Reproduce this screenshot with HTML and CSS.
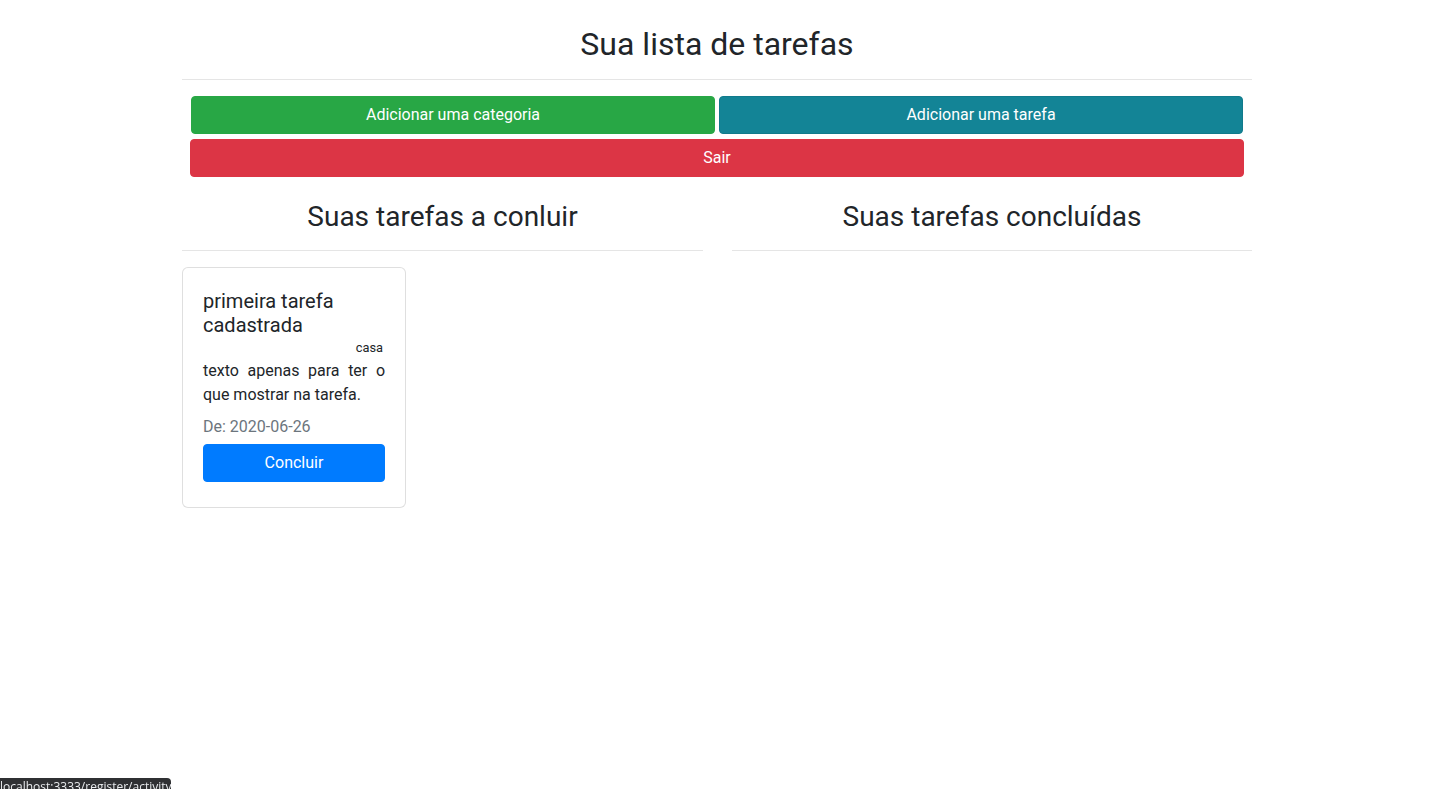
FILE: index.html
```html
<!DOCTYPE html>
<html lang="pt-br">
<head>
<meta charset="utf-8">
<title>Sua lista de tarefas</title>
<link rel="stylesheet" href="styles.css">
</head>
<body>
<main class="container">
  <h2 class="page-title">Sua lista de tarefas</h2>
  <hr class="rule">
  <div class="actions">
    <div class="actions-row">
      <button class="btn btn-success">Adicionar uma categoria</button>
      <button class="btn btn-info">Adicionar uma tarefa</button>
    </div>
    <button class="btn btn-danger btn-block">Sair</button>
  </div>
  <div class="columns">
    <section class="column">
      <h3 class="column-title">Suas tarefas a conluir</h3>
      <hr class="rule">
      <div class="card">
        <div class="card-body">
          <h5 class="card-title">primeira tarefa cadastrada</h5>
          <div class="card-category">casa</div>
          <p class="card-text">texto apenas para ter o que mostrar na tarefa.</p>
          <div class="card-date">De: 2020-06-26</div>
          <button class="btn btn-primary btn-block">Concluir</button>
        </div>
      </div>
    </section>
    <section class="column">
      <h3 class="column-title">Suas tarefas concluídas</h3>
      <hr class="rule">
    </section>
  </div>
</main>
<div class="status-bar">localhost:3333/register/activity</div>
</body>
</html>
```

FILE: styles.css
```css
* { box-sizing: border-box; }

html, body {
  margin: 0;
  padding: 0;
  background: #fff;
}

body {
  font-family: Roboto, "Liberation Sans", Arial, sans-serif;
  font-size: 16px;
  line-height: 1.5;
  color: #212529;
}

.container {
  width: 1070px;
  margin-left: calc(50% - 536.5px);
  padding-top: 25px;
}

.page-title {
  margin: 0;
  font-size: 32px;
  font-weight: 400;
  line-height: 1.2;
  text-align: center;
}

.rule {
  margin: 16px 0;
  border: 0;
  border-top: 1px solid rgba(0, 0, 0, 0.1);
  height: 0;
}

.actions {
  display: flex;
  flex-direction: column;
  gap: 5px;
  padding: 0 8px;
}

.actions-row {
  display: flex;
  gap: 4px;
  padding: 0 1px;
}

.actions-row .btn {
  flex: 1 1 0;
}

.btn {
  display: block;
  height: 38px;
  padding: 6px 12px;
  border: 1px solid transparent;
  border-radius: 4px;
  font-family: inherit;
  font-size: 16px;
  line-height: 24px;
  color: #fff;
  text-align: center;
  cursor: pointer;
}

.btn-block { width: 100%; }

.btn-success { background: #28a745; border-color: #28a745; }
.btn-info { background: #138496; border-color: #117a8b; }
.btn-danger { background: #dc3545; border-color: #dc3545; }
.btn-primary { background: #007bff; border-color: #007bff; }

.columns {
  display: grid;
  grid-template-columns: 521px 520px;
  column-gap: 29px;
  margin-top: 23px;
}

.column-title {
  margin: 0;
  font-size: 28px;
  font-weight: 400;
  line-height: 1.2;
  text-align: center;
}

.card {
  width: 224px;
  border: 1px solid rgba(0, 0, 0, 0.125);
  border-radius: 6px;
  background: #fff;
}

.card-body {
  padding: 21px 20px 25px;
}

.card-title {
  margin: 0;
  font-size: 20px;
  font-weight: 400;
  line-height: 24px;
}

.card-category {
  font-size: 12.8px;
  line-height: 22px;
  text-align: right;
  padding-right: 2px;
}

.card-text {
  margin: 0 0 8px;
  text-align: justify;
  line-height: 24px;
}

.card-date {
  color: #6c757d;
  line-height: 24px;
  margin-bottom: 5px;
}

.status-bar {
  position: fixed;
  left: 0;
  top: 778px;
  width: 171px;
  height: 22px;
  padding: 1px 0 0 0;
  background: #2f3033;
  border-top-right-radius: 4px;
  color: #e8eaed;
  font-family: "Open Sans", "DejaVu Sans", sans-serif;
  font-size: 12px;
  line-height: 16px;
  white-space: nowrap;
  overflow: hidden;
}
```
